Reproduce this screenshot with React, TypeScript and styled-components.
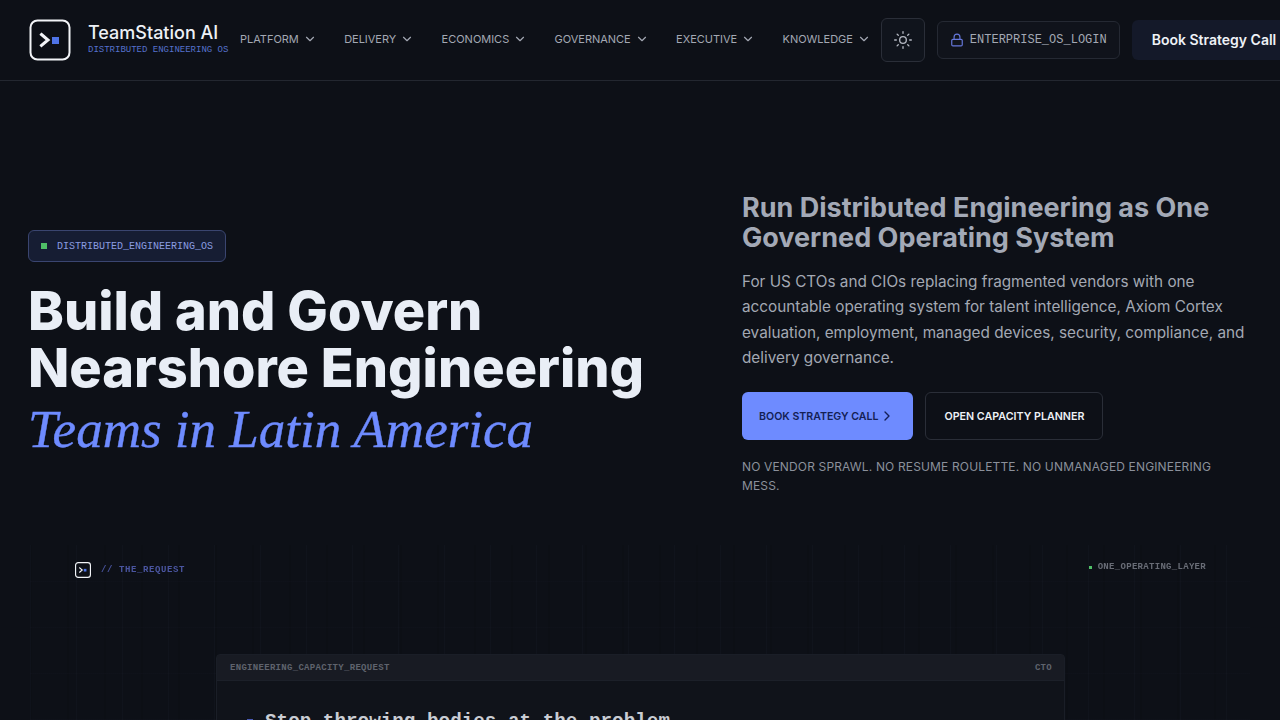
import React from "react";
import styled, { createGlobalStyle } from "styled-components";
import { ChevronDown, ChevronRight, Lock, Sun } from "lucide-react";

const sans = `Inter, "Liberation Sans", sans-serif`;
const mono = `"Liberation Mono", "DejaVu Sans Mono", monospace`;

const Global = createGlobalStyle`
  html, body {
    margin: 0;
    height: 720px;
    overflow: hidden;
    background: #0d1017;
  }
  * { box-sizing: border-box; }
`;

const Page = styled.div`
  width: 1280px;
  height: 720px;
  overflow: hidden;
  background: #0d1017;
  font-family: ${sans};
`;

const Header = styled.header`
  display: flex;
  align-items: center;
  height: 81px;
  padding-left: 29px;
  border-bottom: 1px solid #232730;
  white-space: nowrap;
`;

const Brand = styled.div`
  display: flex;
  align-items: center;
  gap: 17px;
  width: 211px;
  flex: none;
`;

const BrandText = styled.div`
  display: flex;
  flex-direction: column;
  padding-bottom: 4px;
`;

const BrandName = styled.span`
  font-size: 18px;
  line-height: 24px;
  font-weight: 500;
  color: #eef1f6;
`;

const BrandTag = styled.span`
  font-family: ${mono};
  font-size: 9px;
  line-height: 11px;
  color: #5570cc;
`;

const Nav = styled.nav`
  display: flex;
  gap: 27.4px;
  flex: none;
  padding-bottom: 2px;
`;

const NavItem = styled.a`
  display: flex;
  align-items: center;
  gap: 4px;
  font-size: 11px;
  letter-spacing: -0.02px;
  color: #a3a8b3;
  svg { color: #a3a8b3; }
`;

const ThemeButton = styled.button`
  display: flex;
  align-items: center;
  justify-content: center;
  width: 44px;
  height: 44px;
  margin-left: 10px;
  flex: none;
  background: #10141c;
  border: 1px solid #2a2e38;
  border-radius: 6px;
  color: #b4b8c2;
`;

const LoginButton = styled.a`
  display: flex;
  align-items: center;
  gap: 6px;
  height: 38px;
  margin-left: 12px;
  padding: 0 12px;
  flex: none;
  background: #10131b;
  border: 1px solid #252933;
  border-radius: 6px;
  font-family: ${mono};
  font-size: 12px;
  color: #a3a8b3;
  svg { color: #6678dc; }
`;

const CallButton = styled.a`
  display: flex;
  align-items: center;
  height: 40px;
  margin-left: 12px;
  padding: 0 20px 2px;
  flex: none;
  background: #141929;
  border-radius: 6px;
  font-size: 14px;
  font-weight: 600;
  color: #eef1f6;
`;

const Hero = styled.section`
  display: grid;
  grid-template-columns: 714px 510px;
  align-items: center;
  height: 464px;
  padding: 62px 0 0 28px;
`;

const HeroLead = styled.div`
  padding-top: 4px;
`;

const Badge = styled.div`
  display: inline-flex;
  align-items: center;
  gap: 10px;
  height: 32px;
  padding: 0 12px;
  background: #161d33;
  border: 1px solid #3a4570;
  border-radius: 6px;
  font-family: ${mono};
  font-size: 10px;
  color: #8a9ce0;
`;

const StatusDot = styled.i<{ $size: number }>`
  display: block;
  width: ${(p) => p.$size}px;
  height: ${(p) => p.$size}px;
  background: #4fbf67;
`;

const Title = styled.h1`
  margin: 20px 0 0;
  font-size: 54px;
  line-height: 57px;
  font-weight: 800;
  color: #e9eef6;
  white-space: nowrap;
`;

const TitleAccent = styled.em`
  display: block;
  font-family: "Liberation Serif", serif;
  font-size: 53px;
  line-height: 66px;
  font-weight: 400;
  -webkit-text-stroke: 0.4px #6e8bff;
  color: #6e8bff;
`;

const Subtitle = styled.h2`
  margin: 0 0 16px;
  font-size: 27px;
  line-height: 30px;
  font-weight: 700;
  color: #a3a9b6;
`;

const Lede = styled.p`
  margin: 0 0 22px;
  font-size: 15.3px;
  line-height: 25.4px;
  color: #a3a8b3;
`;

const Actions = styled.div`
  display: flex;
  gap: 12px;
`;

const PrimaryAction = styled.a`
  display: flex;
  align-items: center;
  gap: 1px;
  height: 48px;
  padding: 0 18px 0 17px;
  background: #6e8bff;
  border-radius: 6px;
  font-size: 10.6px;
  font-weight: 600;
  color: #141f55;
`;

const SecondaryAction = styled.a`
  display: flex;
  align-items: center;
  height: 48px;
  padding: 0 18px;
  border: 1px solid #2a2e38;
  border-radius: 6px;
  font-size: 10.7px;
  font-weight: 600;
  color: #eef1f6;
`;

const Fineprint = styled.p`
  margin: 17px 0 0;
  font-size: 12px;
  line-height: 19px;
  letter-spacing: 0.15px;
  color: #8b909b;
`;

const Canvas = styled.section`
  position: relative;
  height: 175px;
  padding: 16px 74px 0 75px;
  filter: blur(0.6px);
`;

const GridBackdrop = styled.div`
  position: absolute;
  inset: 0 30px 0;
  background-image:
    repeating-linear-gradient(90deg, rgba(120, 135, 170, 0.035) 0 1px, transparent 1px 46px),
    repeating-linear-gradient(90deg, rgba(0, 0, 0, 0.05) 0 2px, transparent 2px 37px),
    repeating-linear-gradient(0deg, rgba(120, 135, 170, 0.02) 0 1px, transparent 1px 46px);
`;

const CanvasLabels = styled.div`
  position: relative;
  display: flex;
  justify-content: space-between;
`;

const RequestLabel = styled.div`
  display: flex;
  align-items: center;
  gap: 10px;
  margin-top: 1px;
  font-family: ${mono};
  font-size: 9px;
  font-weight: 700;
  letter-spacing: 0.6px;
  color: #4a55a0;
`;

const LayerLabel = styled.div`
  display: flex;
  align-items: center;
  gap: 6px;
  height: 12px;
  font-family: ${mono};
  font-size: 9px;
  font-weight: 700;
  letter-spacing: 0.3px;
  color: #686c76;
`;

const RequestCard = styled.div`
  position: relative;
  width: 849px;
  margin: 76px 0 0 141px;
  height: 120px;
  background: #10131a;
  border: 1px solid #1a1e27;
  border-radius: 4px;
`;

const CardBar = styled.div`
  display: flex;
  align-items: center;
  justify-content: space-between;
  height: 26px;
  padding: 0 12px 0 13px;
  background: #181b23;
  border-bottom: 1px solid #1c2029;
  font-family: ${mono};
  font-size: 9px;
  font-weight: 700;
  letter-spacing: 0.3px;
  color: #5f636d;
`;

const CardLine = styled.div`
  display: flex;
  align-items: center;
  gap: 12px;
  padding: 30px 0 0 30px;
  font-family: ${mono};
  font-size: 19.3px;
  font-weight: 700;
  color: #c9ccd3;
  white-space: nowrap;
`;

const LineMark = styled.i`
  display: block;
  width: 6px;
  height: 6px;
  background: #4a5bb5;
`;

const TerminalMark = ({ size, ring = 2 }: { size: number; ring?: number }) => (
  <svg width={size} height={size} viewBox="0 0 42 42" fill="none">
    <rect x="1.5" y="1.5" width="39" height="39" rx="7" stroke="#f2f4f8" strokeWidth={ring} />
    <path d="M12.5 15.5 L19 21 L12.5 26.5" stroke="#f2f4f8" strokeWidth="3" strokeLinecap="square" />
    <rect x="23" y="18" width="7" height="7" fill="#4f74e8" />
  </svg>
);

const navItems = ["PLATFORM", "DELIVERY", "ECONOMICS", "GOVERNANCE", "EXECUTIVE", "KNOWLEDGE"];

export default function App() {
  return (
    <Page>
      <Global />
      <Header>
        <Brand>
          <TerminalMark size={42} />
          <BrandText>
            <BrandName>TeamStation AI</BrandName>
            <BrandTag>DISTRIBUTED ENGINEERING OS</BrandTag>
          </BrandText>
        </Brand>
        <Nav>
          {navItems.map((item) => (
            <NavItem key={item}>
              {item}
              <ChevronDown size={14} />
            </NavItem>
          ))}
        </Nav>
        <ThemeButton>
          <Sun size={20} strokeWidth={1.6} />
        </ThemeButton>
        <LoginButton>
          <Lock size={14} />
          ENTERPRISE_OS_LOGIN
        </LoginButton>
        <CallButton>Book Strategy Call</CallButton>
      </Header>
      <Hero>
        <HeroLead>
          <Badge>
            <StatusDot $size={6} />
            DISTRIBUTED_ENGINEERING_OS
          </Badge>
          <Title>
            Build and Govern
            <br />
            Nearshore Engineering
            <TitleAccent>Teams in Latin America</TitleAccent>
          </Title>
        </HeroLead>
        <div>
          <Subtitle>
            Run Distributed Engineering as One Governed Operating System
          </Subtitle>
          <Lede>
            For US CTOs and CIOs replacing fragmented vendors with one accountable operating
            system for talent intelligence, Axiom Cortex evaluation, employment, managed
            devices, security, compliance, and delivery governance.
          </Lede>
          <Actions>
            <PrimaryAction>
              BOOK STRATEGY CALL
              <ChevronRight size={16} />
            </PrimaryAction>
            <SecondaryAction>OPEN CAPACITY PLANNER</SecondaryAction>
          </Actions>
          <Fineprint>NO VENDOR SPRAWL. NO RESUME ROULETTE. NO UNMANAGED ENGINEERING MESS.</Fineprint>
        </div>
      </Hero>
      <Canvas>
        <GridBackdrop />
        <CanvasLabels>
          <RequestLabel>
            <TerminalMark size={16} ring={3} />
            // THE_REQUEST
          </RequestLabel>
          <LayerLabel>
            <StatusDot $size={3} />
            ONE_OPERATING_LAYER
          </LayerLabel>
        </CanvasLabels>
        <RequestCard>
          <CardBar>
            <span>ENGINEERING_CAPACITY_REQUEST</span>
            <span>CTO</span>
          </CardBar>
          <CardLine>
            <LineMark />
            Stop throwing bodies at the problem
          </CardLine>
        </RequestCard>
      </Canvas>
    </Page>
  );
}
